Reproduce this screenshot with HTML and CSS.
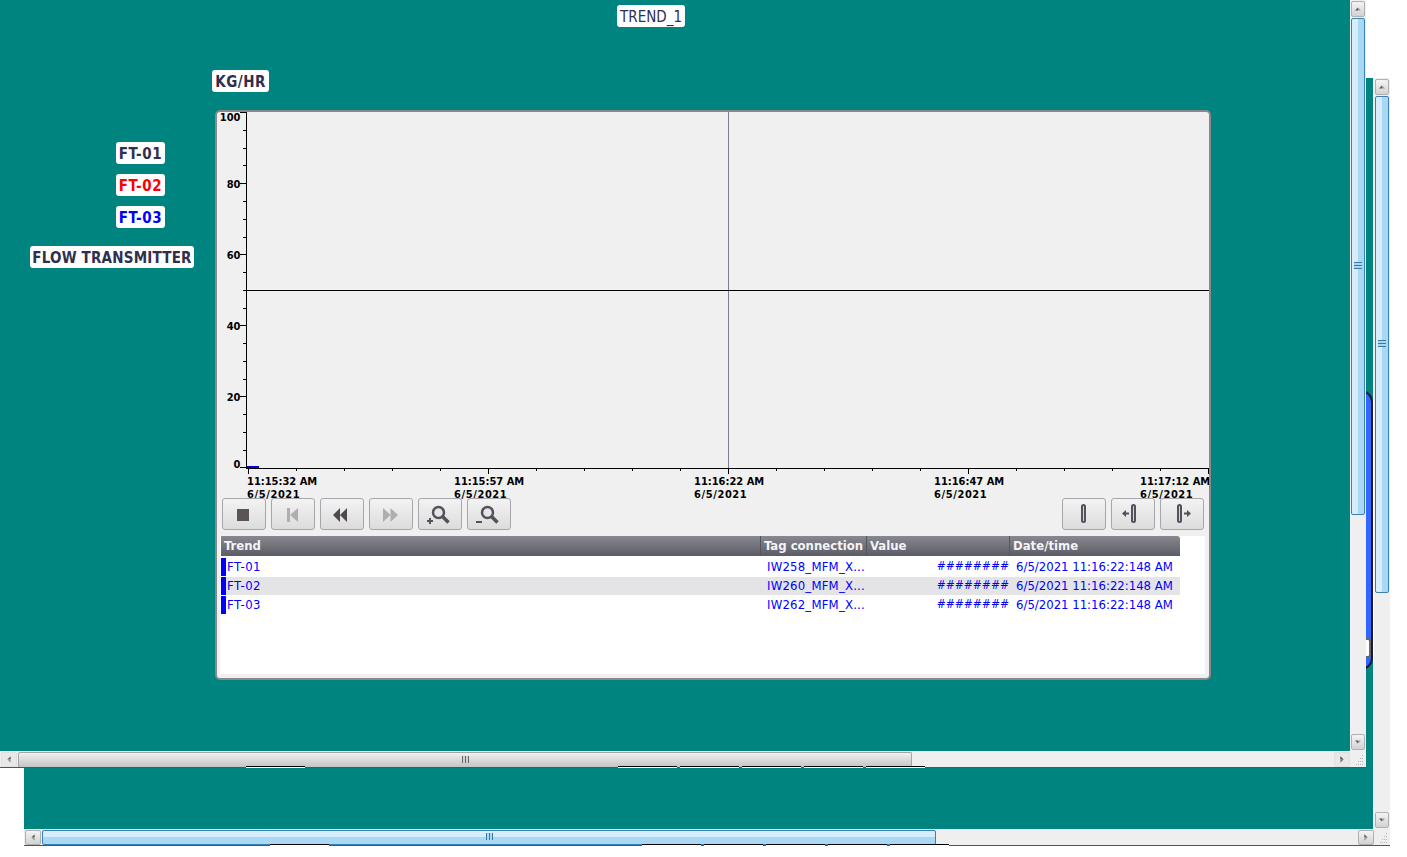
FILE: index.html
```html
<!DOCTYPE html>
<html lang="en">
<head>
<meta charset="utf-8">
<title>TREND_1</title>
<link rel="stylesheet" href="styles.css">
</head>
<body>
<div class="desktop">

  <section class="window window-back">
    <div class="canvas canvas-back">
      <div class="blue-shape"><span class="blue-tag"></span></div>
    </div>
    <div class="vbar">
      <button class="sb-btn"><svg viewBox="0 0 16 16"><path d="M4 10 8 6v4z" fill="#555"/><path d="M8 6l4 4H8z" fill="#999"/></svg></button>
      <div class="vthumb thumb-blue"><span class="vgrip vgrip-blue"></span></div>
      <div class="sb-fill"></div>
      <button class="sb-btn"><svg viewBox="0 0 16 16"><path d="M4 6h4v4z" fill="#555"/><path d="M8 6h4l-4 4z" fill="#999"/></svg></button>
    </div>
    <div class="hbar">
      <button class="sb-btn"><svg viewBox="0 0 16 16"><path d="M10 4v4H6z" fill="#555"/><path d="M10 8v4L6 8z" fill="#999"/></svg></button>
      <div class="hthumb thumb-blue"><span class="hgrip hgrip-blue"></span></div>
      <div class="sb-fill"></div>
      <button class="sb-btn"><svg viewBox="0 0 16 16"><path d="M6 4v4h4z" fill="#555"/><path d="M6 8v4l4-4z" fill="#999"/></svg></button>
    </div>
    <div class="corner"><svg viewBox="0 0 16 16"><path d="M12 4h1v1h-1zM10 7h1v1h-1zM12 7h1v1h-1zM8 10h1v1H8zM10 10h1v1h-1zM12 10h1v1h-1zM6 13h1v1H6zM8 13h1v1H8zM10 13h1v1h-1zM12 13h1v1h-1z" fill="#b5b5b5"/></svg></div>
    <div class="tabs"><i></i><i class="gap"></i><i></i><i></i><i></i><i></i><i></i></div>
  </section>

  <section class="window window-front">
    <div class="canvas">
      <div class="label label-title">TREND_1</div>
      <div class="label label-bold label-unit">KG/HR</div>
      <div class="label label-bold label-tag label-ft1">FT-01</div>
      <div class="label label-bold label-tag label-ft2">FT-02</div>
      <div class="label label-bold label-tag label-ft3">FT-03</div>
      <div class="label label-bold label-flow">FLOW TRANSMITTER</div>

      <div class="panel">
        <svg class="chart" viewBox="217 112 992 386" width="992" height="386">
          <path class="axis" d="M246.5 112V468M240 112.500h7M246 468.500h963"/>
          <path class="axis" d="M240 183.500h7M240 254.500h7M240 325.500h7M240 396.500h7M240 467.500h7"/>
          <path class="axis" d="M243 130.500h4M243 148.500h4M243 165.500h4M243 201.500h4M243 219.500h4M243 237.500h4M243 272.500h4M243 290.500h4M243 308.500h4M243 343.500h4M243 361.500h4M243 379.500h4M243 414.500h4M243 432.500h4M243 450.500h4"/>
          <path class="axis" d="M248.500 468v6M488.500 468v6M728.500 468v6M968.500 468v6M1208.500 468v6"/>
          <path class="axis" d="M296.500 468v3M344.500 468v3M392.500 468v3M440.500 468v3M536.500 468v3M584.500 468v3M632.500 468v3M680.500 468v3M776.500 468v3M824.500 468v3M872.500 468v3M920.500 468v3M1016.500 468v3M1064.500 468v3M1112.500 468v3M1160.500 468v3"/>
          <path class="cursor" d="M728.500 112V468"/>
          <path class="axis" d="M247 290.500h962"/>
          <rect x="247" y="466" width="12" height="2" fill="#0000e0"/>
          <g class="tick-y">
            <text x="240.500" y="121">100</text><text x="240.500" y="188">80</text><text x="240.500" y="259">60</text>
            <text x="240.500" y="330">40</text><text x="240.500" y="401">20</text><text x="240.500" y="468">0</text>
          </g>
          <g class="tick-x">
            <text x="247" y="485">11:15:32 AM</text><text class="tick-date" x="247" y="498">6/5/2021</text>
            <text x="454" y="485">11:15:57 AM</text><text class="tick-date" x="454" y="498">6/5/2021</text>
            <text x="694" y="485">11:16:22 AM</text><text class="tick-date" x="694" y="498">6/5/2021</text>
            <text x="934" y="485">11:16:47 AM</text><text class="tick-date" x="934" y="498">6/5/2021</text>
            <text x="1140" y="485">11:17:12 AM</text><text class="tick-date" x="1140" y="498">6/5/2021</text>
          </g>
        </svg>

        <div class="toolbar">
          <div class="tool-group">
            <button class="tool"><svg viewBox="1 1 42 30"><rect x="15" y="11" width="12" height="12" fill="#5a5458"/></svg></button>
            <button class="tool"><svg viewBox="1 1 42 30"><path d="M16 10h3v14h-3zM27 10v14l-8-7z" fill="#b0adb0"/></svg></button>
            <button class="tool"><svg viewBox="1 1 42 30"><path d="M20 10v14l-7-7zM27 10v14l-7-7z" fill="#4f4a4e"/></svg></button>
            <button class="tool"><svg viewBox="1 1 42 30"><path d="M14 10v14l7.500-7zM21.500 10v14l7.500-7z" fill="#b0adb0"/></svg></button>
            <button class="tool"><svg viewBox="1 1 42 30"><circle cx="20.500" cy="14.500" r="5.500" fill="#e6e6ea" stroke="#55505a" stroke-width="2.500"/><path d="M24.500 18.500l6 6" stroke="#55505a" stroke-width="3.500"/><path d="M9 23h6M12 20v6" stroke="#55505a" stroke-width="2"/></svg></button>
            <button class="tool"><svg viewBox="1 1 42 30"><circle cx="20.500" cy="14.500" r="5.500" fill="#e6e6ea" stroke="#55505a" stroke-width="2.500"/><path d="M24.500 18.500l6 6" stroke="#55505a" stroke-width="3.500"/><path d="M9 24h6" stroke="#55505a" stroke-width="2"/></svg></button>
          </div>
          <div class="tool-group">
            <button class="tool"><svg viewBox="1 1 42 30"><rect x="20" y="7" width="3" height="17" rx="1.500" fill="#d8d8dc" stroke="#55505a" stroke-width="2"/></svg></button>
            <button class="tool"><svg viewBox="1 1 42 30"><rect x="21" y="7" width="3" height="17" rx="1.500" fill="#d8d8dc" stroke="#55505a" stroke-width="2"/><path d="M11 15.500l4-3.500v2.500h3v2h-3v2.500z" fill="#55505a"/></svg></button>
            <button class="tool"><svg viewBox="1 1 42 30"><rect x="18" y="7" width="3" height="17" rx="1.500" fill="#d8d8dc" stroke="#55505a" stroke-width="2"/><path d="M31 15.500l-4-3.500v2.500h-3v2h3v2.500z" fill="#55505a"/></svg></button>
          </div>
        </div>

        <div class="table">
          <div class="thead">
            <div class="col-trend th">Trend</div>
            <div class="col-tag th">Tag connection</div>
            <div class="col-value th">Value</div>
            <div class="col-date th">Date/time</div>
          </div>
          <div class="trow">
            <div class="col-trend td"><span class="marker"></span>FT-01</div>
            <div class="col-tag td">IW258_MFM_X...</div>
            <div class="col-value td">########</div>
            <div class="col-date td">6/5/2021 11:16:22:148 AM</div>
          </div>
          <div class="trow trow-alt">
            <div class="col-trend td"><span class="marker"></span>FT-02</div>
            <div class="col-tag td">IW260_MFM_X...</div>
            <div class="col-value td">########</div>
            <div class="col-date td">6/5/2021 11:16:22:148 AM</div>
          </div>
          <div class="trow">
            <div class="col-trend td"><span class="marker"></span>FT-03</div>
            <div class="col-tag td">IW262_MFM_X...</div>
            <div class="col-value td">########</div>
            <div class="col-date td">6/5/2021 11:16:22:148 AM</div>
          </div>
        </div>
      </div>
    </div>
    <div class="vbar">
      <button class="sb-btn"><svg viewBox="0 0 16 16"><path d="M4 10 8 6v4z" fill="#555"/><path d="M8 6l4 4H8z" fill="#999"/></svg></button>
      <div class="vthumb thumb-blue"><span class="vgrip vgrip-blue"></span></div>
      <div class="sb-fill"></div>
      <button class="sb-btn"><svg viewBox="0 0 16 16"><path d="M4 6h4v4z" fill="#555"/><path d="M8 6h4l-4 4z" fill="#999"/></svg></button>
    </div>
    <div class="hbar">
      <button class="sb-btn sb-flat"><svg viewBox="0 0 16 16"><path d="M10 4v4H6z" fill="#555"/><path d="M10 8v4L6 8z" fill="#999"/></svg></button>
      <div class="hthumb thumb-gray"><span class="hgrip hgrip-gray"></span></div>
      <div class="sb-fill"></div>
      <button class="sb-btn sb-flat"><svg viewBox="0 0 16 16"><path d="M6 4v4h4z" fill="#444"/><path d="M6 8v4l4-4z" fill="#777"/></svg></button>
    </div>
    <div class="corner"><svg viewBox="0 0 16 16"><path d="M12 4h1v1h-1zM10 7h1v1h-1zM12 7h1v1h-1zM8 10h1v1H8zM10 10h1v1h-1zM12 10h1v1h-1zM6 13h1v1H6zM8 13h1v1H8zM10 13h1v1h-1zM12 13h1v1h-1z" fill="#b5b5b5"/></svg></div>
    <div class="tabs"><i></i><i class="gap"></i><i></i><i></i><i></i><i></i><i></i></div>
  </section>
</div>
</body>
</html>
```
FILE: styles.css
```css
* { box-sizing: border-box; }
html, body { margin: 0; height: 100%; background: #fff; overflow: hidden; }
body { font-family: "DejaVu Sans Condensed", "DejaVu Sans", sans-serif; }
.desktop { position: relative; width: 1407px; height: 857px; }

/* windows */
.window {
  position: absolute;
  display: grid;
  grid-template-columns: 1fr 16px;
  grid-template-rows: 1fr 17px;
  width: 1366px;
  height: 768px;
}
.window-back { left: 24px; top: 78px; }
.window-front { left: 0; top: 0; }
.canvas { position: relative; background: #008480; overflow: hidden; }
.canvas-back { margin-right: 1px; }

/* back-window fragment */
.blue-shape {
  position: absolute;
  right: 0;
  top: 312px;
  width: 30px;
  height: 280px;
  background: #3366ff;
  border: 2px solid #1a1a30;
  border-radius: 12px;
}
.blue-tag {
  position: absolute;
  left: 0;
  top: 246px;
  width: 26px;
  height: 20px;
  background: #fff;
  border: 2px solid #666;
  border-radius: 3px;
}

/* scrollbars */
.vbar, .hbar { display: flex; background: #efefef; }
.vbar { flex-direction: column; padding: 1px; width: 16px; }
.hbar { border-bottom: 1px solid #44566e; padding: 1px 0 0 1px; }
.sb-fill { flex: 1; }
.sb-btn {
  display: block;
  flex: none;
  padding: 0;
  border: 1px solid #b0b0b0;
  border-radius: 2px;
  background: linear-gradient(#f4f4f4, #d2d2d2);
}
.vbar .sb-btn { width: 14px; height: 16px; }
.hbar .sb-btn { height: 15px; width: 16px; }
.sb-flat { border-color: #e0e0e0; background: #e8e8e8; }
.sb-btn svg { display: block; width: 100%; height: 100%; }
.vthumb, .hthumb { display: flex; align-items: center; justify-content: center; flex: none; }
.vthumb { height: 497px; margin-top: 1px; }
.hthumb { width: 894px; margin-left: 1px; }
.thumb-blue { border: 1px solid #3a7fb5; border-radius: 2px; }
.vthumb.thumb-blue { background: linear-gradient(90deg, #d6edfc 0 50%, #a9d8f4 50% 100%); }
.hthumb.thumb-blue { background: linear-gradient(#d6edfc 0 50%, #a9d8f4 50% 100%); height: 15px; }
.thumb-gray { border: 1px solid #a5a5a5; border-bottom: 0; height: 15px; border-radius: 2px 2px 0 0; background: linear-gradient(#f0f0f0, #c4c4c4); }
.vgrip { width: 8px; height: 7px; margin-bottom: 2px; background: repeating-linear-gradient(#3a7a9f 0 1px, #a9d8f4 1px 3px); }
.hgrip { width: 7px; height: 7px; margin-bottom: 2px; }
.hgrip-blue { background: repeating-linear-gradient(90deg, #3a7a9f 0 1px, #a9d8f4 1px 3px); }
.hgrip-gray { background: repeating-linear-gradient(90deg, #666 0 1px, #d0d0d0 1px 3px); }
.corner { background: #efefef; border-bottom: 1px solid #44566e; }
.corner svg { display: block; width: 16px; height: 16px; }

/* tab strip peeking below the horizontal scrollbars */
.tabs { position: absolute; display: flex; gap: 3px; top: 100%; margin-top: -2px; left: 246px; }
.tabs i { display: block; width: 59px; height: 2px; background: #fff; border-top: 1px solid #000; }
.tabs i.gap { width: 307px; background: transparent; border: 0; }

/* labels */
.label {
  position: absolute;
  display: flex;
  align-items: center;
  justify-content: center;
  height: 22px;
  padding-top: 2px;
  background: #fff;
  border-radius: 3px;
  color: #2f2f4f;
  font-size: 15px;
  letter-spacing: .2px;
  white-space: nowrap;
}
.label-bold { font-weight: 700; }
.label-tag { letter-spacing: .6px; }
.label-title { left: 617px; top: 5px; width: 68px; letter-spacing: 0; }
.label-unit { left: 212px; top: 70px; width: 57px; letter-spacing: .5px; }
.label-ft1 { left: 116px; top: 142px; width: 49px; }
.label-ft2 { left: 116px; top: 174px; width: 49px; color: #ff0000; }
.label-ft3 { left: 116px; top: 206px; width: 49px; color: #0000ff; }
.label-flow { left: 30px; top: 246px; width: 164px; }

/* trend panel */
.panel {
  position: absolute;
  left: 215px;
  top: 110px;
  width: 996px;
  height: 570px;
  display: flex;
  flex-direction: column;
  background: #f0f0f0;
  border: 2px solid #88888e;
  border-radius: 5px;
  overflow: hidden;
}
.chart { display: block; flex: none; overflow: visible; }
.axis { stroke: #000; stroke-width: 1; fill: none; }
.cursor { stroke: #7c7c94; stroke-width: 1; fill: none; }
.tick-y text, .tick-x text { font-size: 11px; font-weight: 700; fill: #000; }
.tick-y text { text-anchor: end; }
.tick-x text.tick-date { letter-spacing: .6px; }

.toolbar { position: relative; display: flex; justify-content: space-between; flex: none; padding: 0 5px; }
.tool-group { display: flex; gap: 5px; }
.tool {
  width: 44px;
  height: 32px;
  padding: 0;
  border: 1px solid #a6a6ac;
  border-radius: 3px;
  background: linear-gradient(#f3f3f3, #dcdcdc);
}
.tool svg { display: block; width: 42px; height: 30px; }

/* table */
.table {
  flex: 1;
  margin: 6px 4px 4px 3px;
  background: #fff;
  font-size: 13px;
  color: #0000ff;
}
.thead, .trow { display: grid; grid-template-columns: 540px 106px 143px 170px; width: 959px; margin-left: 1px; }
.thead { height: 20px; margin-bottom: 2px; }
.trow { height: 18px; margin-bottom: 1px; }
.trow-alt { background: #e4e4e6; }
.th {
  display: flex;
  align-items: center;
  padding: 0 0 2px 3px;
  color: #f4f4f6;
  font-weight: 700;
  font-size: 13px;
  background: linear-gradient(#888890, #5c5c66);
  border-right: 1px solid #55555d;
}
.col-date.th { border-radius: 0 3px 0 0; border-right: 0; }
.td { display: flex; align-items: center; padding-bottom: 2px; white-space: nowrap; overflow: hidden; }
.col-trend.td { letter-spacing: .5px; }
.col-tag.td { padding-left: 6px; letter-spacing: .2px; }
.col-value.td { justify-content: flex-end; padding-right: 1px; font-size: 12px; }
.col-date.td { padding-left: 6px; }
.marker { display: block; width: 5px; height: 18px; margin: 0 1px -2px 0; background: #0000ff; }
```
